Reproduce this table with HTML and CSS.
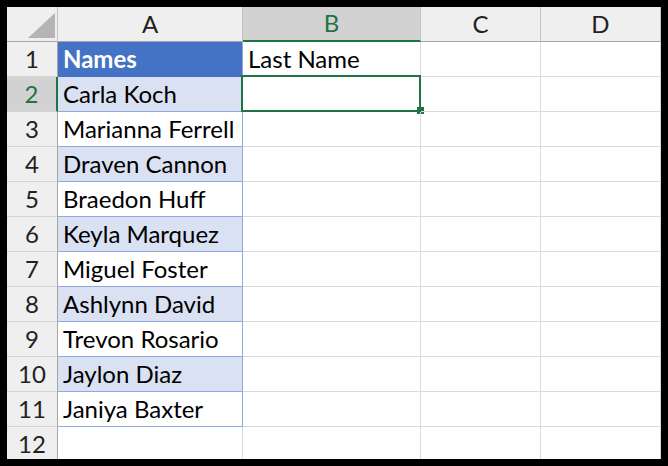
FILE: index.html
```html
<!DOCTYPE html>
<html>
<head>
<meta charset="utf-8">
<link rel="stylesheet" href="styles.css">
</head>
<body>
<div class="frame">
  <div class="sheet">
    <div class="hd corner"><span class="tri"></span></div>
    <div class="hd col">A</div>
    <div class="hd col sel-col">B</div>
    <div class="hd col">C</div>
    <div class="hd col">D</div>

    <div class="hd row">1</div>
    <div class="c t th">Names</div>
    <div class="c">Last Name</div>
    <div class="c"></div>
    <div class="c"></div>

    <div class="hd row sel-row">2</div>
    <div class="c t band">Carla Koch</div>
    <div class="c active"><span class="selbox"></span><span class="handle"></span></div>
    <div class="c"></div>
    <div class="c"></div>

    <div class="hd row">3</div>
    <div class="c t">Marianna Ferrell</div>
    <div class="c"></div><div class="c"></div><div class="c"></div>

    <div class="hd row">4</div>
    <div class="c t band">Draven Cannon</div>
    <div class="c"></div><div class="c"></div><div class="c"></div>

    <div class="hd row">5</div>
    <div class="c t">Braedon Huff</div>
    <div class="c"></div><div class="c"></div><div class="c"></div>

    <div class="hd row">6</div>
    <div class="c t band">Keyla Marquez</div>
    <div class="c"></div><div class="c"></div><div class="c"></div>

    <div class="hd row">7</div>
    <div class="c t">Miguel Foster</div>
    <div class="c"></div><div class="c"></div><div class="c"></div>

    <div class="hd row">8</div>
    <div class="c t band">Ashlynn David</div>
    <div class="c"></div><div class="c"></div><div class="c"></div>

    <div class="hd row">9</div>
    <div class="c t">Trevon Rosario</div>
    <div class="c"></div><div class="c"></div><div class="c"></div>

    <div class="hd row">10</div>
    <div class="c t band">Jaylon Diaz</div>
    <div class="c"></div><div class="c"></div><div class="c"></div>

    <div class="hd row">11</div>
    <div class="c t">Janiya Baxter</div>
    <div class="c"></div><div class="c"></div><div class="c"></div>

    <div class="hd row">12</div>
    <div class="c"></div><div class="c"></div><div class="c"></div><div class="c"></div>
  </div>
</div>
</body>
</html>
```

FILE: styles.css
```css
html, body {
  margin: 0;
  padding: 0;
  background: #000;
}
.frame {
  width: 668px;
  height: 466px;
  padding: 7px 0 0 7px;
  box-sizing: border-box;
  background: #000;
}
.sheet {
  width: 654px;
  height: 452px;
  overflow: hidden;
  background: #fff;
  display: grid;
  grid-template-columns: 51px 185px 178px 120px 120px;
  grid-auto-rows: 35px;
  font-family: Lato, "Open Sans", sans-serif;
  font-size: 24px;
  color: #000;
}
.sheet > div {
  box-sizing: border-box;
  border-right: 1px solid #dadada;
  border-bottom: 1px solid #dadada;
  display: flex;
  align-items: center;
  white-space: nowrap;
  position: relative;
  padding-bottom: 2px;
}
.hd {
  background: #efefef;
  color: #222;
  justify-content: center;
}
.hd.col {
  border-right-color: #c4c4c4;
  border-bottom-color: #a6a6a6;
}
.hd.row {
  border-right-color: #a6a6a6;
  border-bottom-color: #d4d4d4;
}
.hd.corner {
  border-right-color: #c4c4c4;
  border-bottom-color: #a6a6a6;
}
.tri {
  position: absolute;
  right: 2px;
  bottom: 3px;
  width: 0;
  height: 0;
  border-style: solid;
  border-width: 0 0 25px 27px;
  border-color: transparent transparent #b4b4b4 transparent;
}
.sel-col {
  background: #d2d2d2;
  color: #217346;
}
.hd.sel-col {
  border-bottom: 2px solid #217346;
}
.sel-row {
  color: #217346;
}
.hd.sel-row {
  background: #d2d2d2;
  border-right: 2px solid #217346;
}
.c {
  padding-left: 5px;
}
.c.t {
  border-right-color: #8eaadb;
  border-bottom-color: #8eaadb;
}
.c.band {
  background: #d9e1f2;
}
.c.th {
  background: #4472c4;
  color: #fff;
  font-weight: 700;
  border-bottom-color: #4472c4;
}
.selbox {
  position: absolute;
  left: -2px;
  top: -2px;
  right: -1px;
  bottom: -1px;
  border: 2px solid #217346;
}
.handle {
  position: absolute;
  right: -4px;
  bottom: -3px;
  width: 7px;
  height: 7px;
  background: #217346;
}
```
